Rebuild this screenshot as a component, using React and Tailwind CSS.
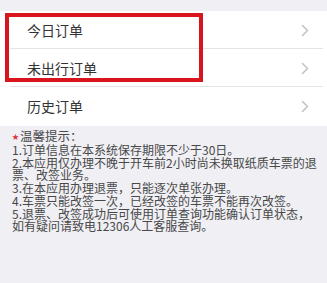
import React from "react";

const font = { fontFamily: '"Noto Sans CJK SC", "Noto Sans", sans-serif' };

function Chevron() {
  return (
    <svg width="8" height="13" viewBox="0 0 8 13" className="text-[#c4c4c8]">
      <path d="M1.5 1.5 L6.5 6.5 L1.5 11.5" fill="none" stroke="currentColor" strokeWidth="1.6" strokeLinecap="round" strokeLinejoin="round" />
    </svg>
  );
}

function Row({ label, last }) {
  return (
    <div className="relative flex h-[38px] items-center pl-[27px] pr-[18px]">
      <span className="flex-1 text-[14px] text-[#333]">{label}</span>
      <Chevron />
      {!last && <div className="absolute bottom-0 left-[10px] right-[4px] h-px bg-[#e4e4e8]" />}
    </div>
  );
}

export default function App() {
  const lines = [
    "1.订单信息在本系统保存期限不少于30日。",
    "2.本应用仅办理不晚于开车前2小时尚未换取纸质车票的退",
    "票、改签业务。",
    "3.在本应用办理退票，只能逐次单张办理。",
    "4.车票只能改签一次，已经改签的车票不能再次改签。",
    "5.退票、改签成功后可使用订单查询功能确认订单状态，",
    "如有疑问请致电12306人工客服查询。",
  ];
  return (
    <div className="h-[283px] w-[327px] overflow-hidden bg-[#efeff4]" style={font}>
      <div className="h-[11px]" />
      <div className="relative bg-white pb-px">
        <Row label="今日订单" />
        <Row label="未出行订单" />
        <Row label="历史订单" last />
        <div className="absolute left-[5px] top-[2px] h-[69px] w-[198px] border-[4px] border-[#d8141c]" />
      </div>
      <div className="px-[12px] pt-[2px] pr-0 text-[#484848]">
        <div className="flex items-center text-[12.5px] leading-[16px]">
          <span className="mr-[1px] text-[7px] text-[#e0303a]">★</span>
          <span>温馨提示：</span>
        </div>
        <div className="text-[12px] leading-[12.7px]">
          {lines.map((l) => (
            <div key={l} className="whitespace-nowrap">{l}</div>
          ))}
        </div>
      </div>
    </div>
  );
}
